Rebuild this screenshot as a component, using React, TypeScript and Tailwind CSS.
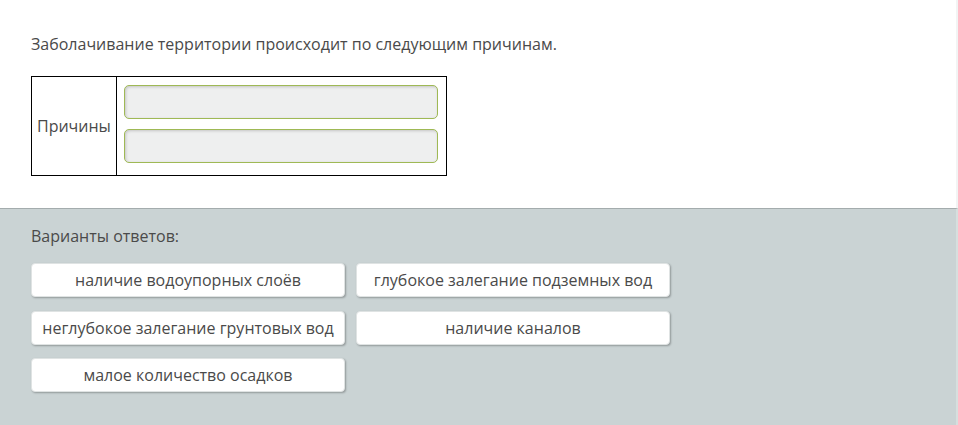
const answers = [
  "наличие водоупорных слоёв",
  "глубокое залегание подземных вод",
  "неглубокое залегание грунтовых вод",
  "наличие каналов",
  "малое количество осадков",
];

export default function App() {
  return (
    <div
      className="w-[958px] h-[425px] flex flex-col bg-white text-[#4a4a4a] text-[16px] leading-5"
      style={{ fontFamily: '"Open Sans", "Noto Sans", sans-serif' }}
    >
      <section className="px-[31px] pt-[34px] pb-[32px] border-r-2 border-[#f2f4f4]">
        <p>Заболачивание территории происходит по следующим причинам.</p>
        <table className="mt-[22px] border border-black border-collapse">
          <tbody>
            <tr>
              <td className="border border-black px-[5px] align-middle">Причины</td>
              <td className="border border-black pl-[7px] pr-[8px] pt-[8px] pb-[12px]">
                <div className="flex flex-col gap-[10px]">
                  <div className="w-[314px] h-[34px] rounded-[5px] border border-[#9fb955] bg-[#eeefef] shadow-[inset_1px_1px_3px_rgba(0,0,0,0.18)]" />
                  <div className="w-[314px] h-[34px] rounded-[5px] border border-[#9fb955] bg-[#eeefef] shadow-[inset_1px_1px_3px_rgba(0,0,0,0.18)]" />
                </div>
              </td>
            </tr>
          </tbody>
        </table>
      </section>

      <section className="flex-1 bg-[#cad3d4] border-t border-[#a4acad] border-r-2 border-r-[#d6dfde] px-[31px] pt-[17px]">
        <p>Варианты ответов:</p>
        <div className="mt-[17px] grid grid-cols-[314px_314px] gap-x-[11px] gap-y-[13.5px]">
          {answers.map((a) => (
            <div
              key={a}
              className="h-[34px] rounded-[4px] bg-white border border-[#dfe3e3] shadow-[1px_1px_2px_rgba(0,0,0,0.28)] flex items-center justify-center whitespace-nowrap"
            >
              {a}
            </div>
          ))}
        </div>
      </section>
    </div>
  );
}
